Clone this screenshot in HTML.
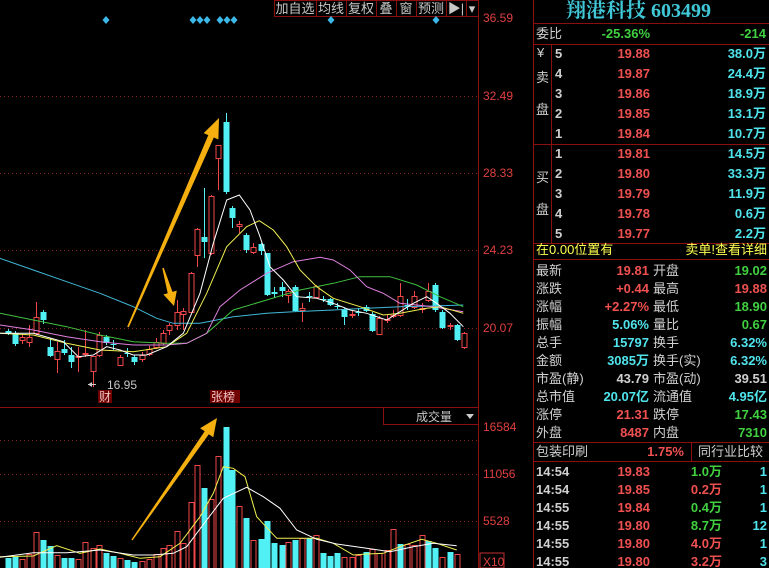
<!DOCTYPE html>
<html><head><meta charset="utf-8"><style>
html,body{margin:0;padding:0;background:#000;width:769px;height:568px;overflow:hidden}
body{position:relative;font-family:"Liberation Sans","Noto Sans CJK SC",sans-serif}
svg{position:absolute;left:0;top:0}
.t{position:absolute;font-size:13px;line-height:16px;white-space:nowrap}
.rt{text-align:right}
.r{color:#f05050;font-weight:bold}.c{color:#50e4ec;font-weight:bold}.g{color:#40d040;font-weight:bold}.w{color:#d0d0d0}.y{color:#ffff50}
.wb{color:#d0d0d0;font-weight:bold}
</style></head><body>
<svg id="s" width="769" height="568" xmlns="http://www.w3.org/2000/svg"></svg>
<div class="t" style="left:566px;top:0px;font:bold 20px 'Liberation Serif','Noto Serif CJK SC',serif;color:#40c8d8;line-height:22px">翔港科技 603499</div>
<div id="rp"></div>
<script>
var S=document.getElementById('s'),h='';
function L(x1,y1,x2,y2,c,d){h+='<line x1="'+x1+'" y1="'+y1+'" x2="'+x2+'" y2="'+y2+'" stroke="'+c+'" stroke-width="1"'+(d?' stroke-dasharray="1,3"':'')+'/>';}
function R(x,y,w,hh,f,s){h+='<rect x="'+x+'" y="'+y+'" width="'+w+'" height="'+hh+'" fill="'+f+'" stroke="'+(s||'none')+'"/>';}
function T(x,y,t,c,sz,a){h+='<text x="'+x+'" y="'+y+'" fill="'+c+'" font-size="'+(sz||12)+'" font-family="Liberation Sans,Noto Sans CJK SC,sans-serif"'+(a?' text-anchor="'+a+'"':'')+'>'+t+'</text>';}
var DR='#8a1010';
[96,173,250,328,440,474,521].forEach(function(y){L(0,y+.5,478,y+.5,'#902020',1)});
L(478.5,0,478.5,568,DR);L(0,407.5,478,407.5,DR);
L(533.5,0,533.5,568,DR);
[[36.59,22],[32.49,100],[28.33,177],[24.23,254],[20.07,332]].forEach(function(a){T(483,a[1],a[0].toFixed(2),'#e04040',12)});
[['16584',431],['11056',478],['5528',525]].forEach(function(a){T(483,a[1],a[0],'#e04040',12)});
R(480,553,24,15,'none','#c03030');T(483,566,'X10','#e04040',12);
var tb=[[274,42,'加自选'],[316,30,'均线'],[346,30,'复权'],[376,20,'叠'],[396,20,'窗'],[416,30,'预测'],[446,20,'▶|'],[466,12,'▾']];
tb.forEach(function(b){R(b[0]+.5,.5,b[1],16,'#000',DR);T(b[0]+b[1]/2,13,b[2],'#c8c8c8',13,'middle')});
[106,193,200,207,220,227,234,331,436].forEach(function(x){h+='<polygon points="'+x+',16 '+(x+3.5)+',20 '+x+',24 '+(x-3.5)+',20" fill="#3cb8e8"/>'});
var C=[[8,331,333,329,335,'c'],[15,333,344,331,346,'c'],[22,337,340,334,344,'r'],[29,337,342,325,347,'r'],[36,317,333,302,335,'r'],[43,312,320,310,324,'c'],[50,347,356,338,357,'c'],[57,351,359,342,373,'r'],[64,349,353,340,355,'c'],[71,355,362,347,368,'c'],[78,356,357,347,372,'r'],[85,353,354,330,357,'r'],[93,356,371,356,387,'r'],[99,335,355,332,357,'r'],[106,337,343,335,345,'c'],[113,344,345,340,350,'c'],[120,357,365,355,366,'r'],[127,353,354,348,357,'c'],[134,357,362,355,365,'c'],[142,355,359,352,362,'r'],[149,349,354,346,356,'r'],[156,342,347,338,349,'r'],[163,333,343,330,345,'r'],[169,325,330,323,335,'r'],[177,312,325,300,330,'r'],[183,311,314,308,330,'r'],[191,273,312,272,313,'r'],[197,229,255,228,267,'r'],[204,237,242,188,258,'c'],[211,196,253,195,255,'r'],[218,145,158,145,190,'r'],[226,122,192,113,194,'c'],[232,208,218,206,228,'c'],[239,224,226,221,233,'r'],[246,235,250,233,253,'c'],[253,247,252,243,254,'r'],[261,244,251,243,255,'c'],[267,253,295,253,296,'c'],[274,292,294,287,298,'c'],[282,287,291,282,297,'c'],[288,291,295,289,303,'r'],[295,287,311,285,312,'c'],[302,308,310,303,322,'r'],[309,296,297,292,302,'c'],[316,286,297,285,298,'r'],[323,299,300,296,302,'c'],[330,299,305,298,306,'c'],[337,306,307,303,309,'c'],[344,309,317,308,325,'c'],[352,314,315,311,318,'r'],[358,312,313,308,316,'c'],[366,307,311,305,312,'c'],[372,314,331,312,332,'c'],[379,318,334,316,335,'r'],[387,319,320,315,323,'r'],[393,315,316,310,318,'r'],[400,296,315,283,317,'r'],[407,305,306,299,310,'c'],[414,296,307,291,309,'r'],[422,308,309,303,313,'r'],[428,291,300,283,302,'r'],[435,285,310,283,312,'c'],[442,312,328,310,329,'c'],[450,325,326,323,330,'r'],[457,325,340,324,341,'c'],[464,333,347,332,349,'r']];
var RC='#f04848',CC='#50f0f4';
C.forEach(function(c){var col=c[5]=='r'?RC:CC;L(c[0]+.5,c[3],c[0]+.5,c[4],col);var hh=Math.max(1,c[2]-c[1]);if(c[5]=='r')R(c[0]-2,c[1]+.5,5,hh,'#000',col);else R(c[0]-2.5,c[1],6,hh,col);});
function P(pts,col,oy){var s='';for(var i=0;i<pts.length;i+=2)s+=(pts[i]/3).toFixed(1)+','+(oy+pts[i+1]/3).toFixed(1)+' ';h+='<polyline points="'+s+'" fill="none" stroke="'+col+'" stroke-width="1"/>';}
P([0,295,100,330,200,365,300,400,400,440,470,475,520,490,600,490,700,470,800,460,880,455,1000,450,1100,445,1200,440,1300,438,1390,435],'#40b8d8',160);
P([0,460,100,480,200,500,300,525,400,545,500,550,560,550,620,520,700,450,800,420,900,390,1000,370,1080,350,1170,350,1250,375,1320,410,1390,440],'#40c040',160);
P([0,495,100,510,200,530,300,545,400,555,500,555,560,550,620,520,660,440,720,390,800,340,880,305,960,292,1000,300,1050,330,1100,380,1150,400,1200,430,1300,440,1390,455],'#e080e0',160);
P([0,520,100,525,200,550,300,570,400,575,500,560,560,520,620,400,680,260,740,200,778,182,820,210,860,260,900,330,950,380,1000,415,1080,440,1150,465,1200,460,1280,445,1320,440,1390,460],'#f0f050',160);
P([0,520,100,520,190,545,235,590,280,585,320,560,360,570,400,585,440,585,500,560,550,520,600,400,640,250,680,120,718,105,750,150,780,230,810,320,850,360,890,410,950,415,1000,430,1050,450,1100,460,1160,480,1200,455,1240,430,1280,410,1310,430,1350,460,1390,500],'#ffffff',160);
L(88,384.5,96,384.5,'#ccc');T(107,389,'16.95','#c8c8c8',12);h+='<polygon points="88,384.5 92,382 92,387" fill="#ccc"/>';
R(98,390,14,13,'#700000');T(99,401,'财','#f0c0c0',12);
R(210,390,30,13,'#700000');T(211,401,'张榜','#f0c0c0',12);
var V=[[25,475,'c'],[45,472,'c'],[67,478,'r'],[88,462,'r'],[108,397,'r'],[130,420,'c'],[150,438,'c'],[172,465,'r'],[192,475,'c'],[213,475,'c'],[235,478,'r'],[256,427,'r'],[278,443,'r'],[298,435,'r'],[318,458,'c'],[340,468,'c'],[360,475,'r'],[382,480,'c'],[403,485,'c'],[425,482,'r'],[446,478,'r'],[467,462,'r'],[488,443,'r'],[508,435,'r'],[530,393,'r'],[550,430,'r'],[572,307,'r'],[592,195,'r'],[613,263,'c'],[633,297,'r'],[655,168,'r'],[677,82,'c'],[697,210,'c'],[718,318,'r'],[738,353,'c'],[760,420,'r'],[782,417,'c'],[802,363,'c'],[822,428,'c'],[845,435,'c'],[865,427,'r'],[885,420,'c'],[907,413,'r'],[928,413,'c'],[948,405,'r'],[970,458,'c'],[990,467,'c'],[1012,458,'c'],[1033,470,'r'],[1055,470,'r'],[1075,465,'r'],[1097,455,'c'],[1117,448,'r'],[1138,458,'r'],[1160,450,'r'],[1180,388,'r'],[1200,432,'c'],[1222,432,'r'],[1243,435,'r'],[1265,405,'r'],[1285,422,'c'],[1305,443,'c'],[1327,470,'r'],[1350,455,'c'],[1370,462,'r']];
V.forEach(function(v){var x=Math.round(v[0]/3),y=Math.round(400+v[1]/3);if(v[2]=='r')R(x-2,y+.5,5,570-y,'#000',RC);else R(x-2.5,y,6,570-y,CC);});
P([0,470,100,468,170,437,240,460,300,447,360,460,420,475,480,470,540,430,600,350,640,280,670,200,700,205,735,230,770,350,830,415,880,415,950,415,1000,430,1060,465,1100,462,1150,460,1200,440,1265,418,1310,430,1370,450],'#f0f050',400);
P([0,472,100,458,200,458,300,450,400,465,460,465,520,460,560,440,620,360,670,295,740,262,790,290,840,325,890,390,950,418,1010,432,1100,445,1170,455,1240,440,1300,430,1370,437],'#ffffff',400);
L(383.5,407,383.5,425,DR);L(383,424.5,478,424.5,DR);T(434,421,'成交量','#c8c8c8',12,'middle');h+='<polygon points="466,414 474,414 470,419" fill="#ccc"/>';
function A(x1,y1,x2,y2,w,hw,hl){var dx=x2-x1,dy=y2-y1,l=Math.hypot(dx,dy),ux=dx/l,uy=dy/l,px=-uy,py=ux;var bx=x2-ux*hl,by=y2-uy*hl;
var p=[[x1+px*w/2*.3,y1+py*w/2*.3],[bx+px*w/2,by+py*w/2],[bx+px*hw,by+py*hw],[x2,y2],[bx-px*hw,by-py*hw],[bx-px*w/2,by-py*w/2],[x1-px*w/2*.3,y1-py*w/2*.3]];
h+='<polygon points="'+p.map(function(q){return q[0].toFixed(1)+','+q[1].toFixed(1)}).join(' ')+'" fill="#f5b010"/>';}
A(128,327,219,118,6,8,20);A(163,268,174,306,5,7,14);A(132,540,217,418,5,8,18);
S.innerHTML=h;
var rp='',r='';
function D(x,y,t,cl,right){rp+='<div class="t '+cl+'" style="'+(right?'right:'+(769-x)+'px':'left:'+x+'px')+';top:'+(y-8)+'px">'+t+'</div>';}
function HL(y,x1,x2){r+='<line x1="'+(x1||533)+'" y1="'+y+'.5" x2="'+(x2||769)+'" y2="'+y+'.5" stroke="'+DR+'"/>';}
HL(23);HL(44);HL(144,533);HL(243);HL(259);HL(442);HL(461);
r+='<line x1="551.5" y1="44" x2="551.5" y2="243" stroke="'+DR+'"/>';
r+='<line x1="691.5" y1="442" x2="691.5" y2="461" stroke="'+DR+'"/>';
D(536,34,'委比','w');D(650,34,'-25.36%','g',1);D(766,34,'-214','g',1);
D(537,53,'¥','w');D(536,78,'卖','w');D(536,110,'盘','w');D(536,178,'买','w');D(536,210,'盘','w');
var sell=[['5','19.88','38.0万'],['4','19.87','24.4万'],['3','19.86','18.9万'],['2','19.85','13.1万'],['1','19.84','10.7万']];
sell.forEach(function(s,i){var y=54+i*20;D(555,y,s[0],'wb');D(650,y,s[1],'r',1);D(766,y,s[2],'c',1);});
var buy=[['1','19.81','14.5万'],['2','19.80','33.3万'],['3','19.79','11.9万'],['4','19.78','0.6万'],['5','19.77','2.2万']];
buy.forEach(function(s,i){var y=154+i*20;D(555,y,s[0],'wb');D(650,y,s[1],'r',1);D(766,y,s[2],'c',1);});
D(536,250,'在0.00位置有','y');D(767,250,'卖单!查看详细','y',1);
var st=[['最新','19.81','r','开盘','19.02','g'],['涨跌','+0.44','r','最高','19.88','r'],['涨幅','+2.27%','r','最低','18.90','g'],['振幅','5.06%','c','量比','0.67','g'],['总手','15797','c','换手','6.32%','c'],['金额','3085万','c','换手(实)','6.32%','c'],['市盈(静)','43.79','wb','市盈(动)','39.51','wb'],['总市值','20.07亿','c','流通值','4.95亿','c'],['涨停','21.31','r','跌停','17.43','g'],['外盘','8487','r','内盘','7310','g']];
st.forEach(function(s,i){var y=271+i*18;D(536,y,s[0],'w');D(649,y,s[1],s[2],1);D(653,y,s[3],'w');D(767,y,s[4],s[5],1);});
D(536,452,'包装印刷','w');D(684,452,'1.75%','r',1);D(698,452,'同行业比较','w');
var tk=[['14:54','19.83','1.0万','g','1'],['14:54','19.85','0.2万','r','1'],['14:55','19.84','0.4万','g','1'],['14:55','19.80','8.7万','g','12'],['14:55','19.80','4.0万','r','1'],['14:55','19.80','3.2万','r','3']];
tk.forEach(function(s,i){var y=472+i*18;D(536,y,s[0],'wb');D(650,y,s[1],'r',1);D(722,y,s[2],s[3],1);D(767,y,s[4],'c',1);});
S.innerHTML+=r;
document.getElementById('rp').innerHTML=rp;
</script>
</body></html>
